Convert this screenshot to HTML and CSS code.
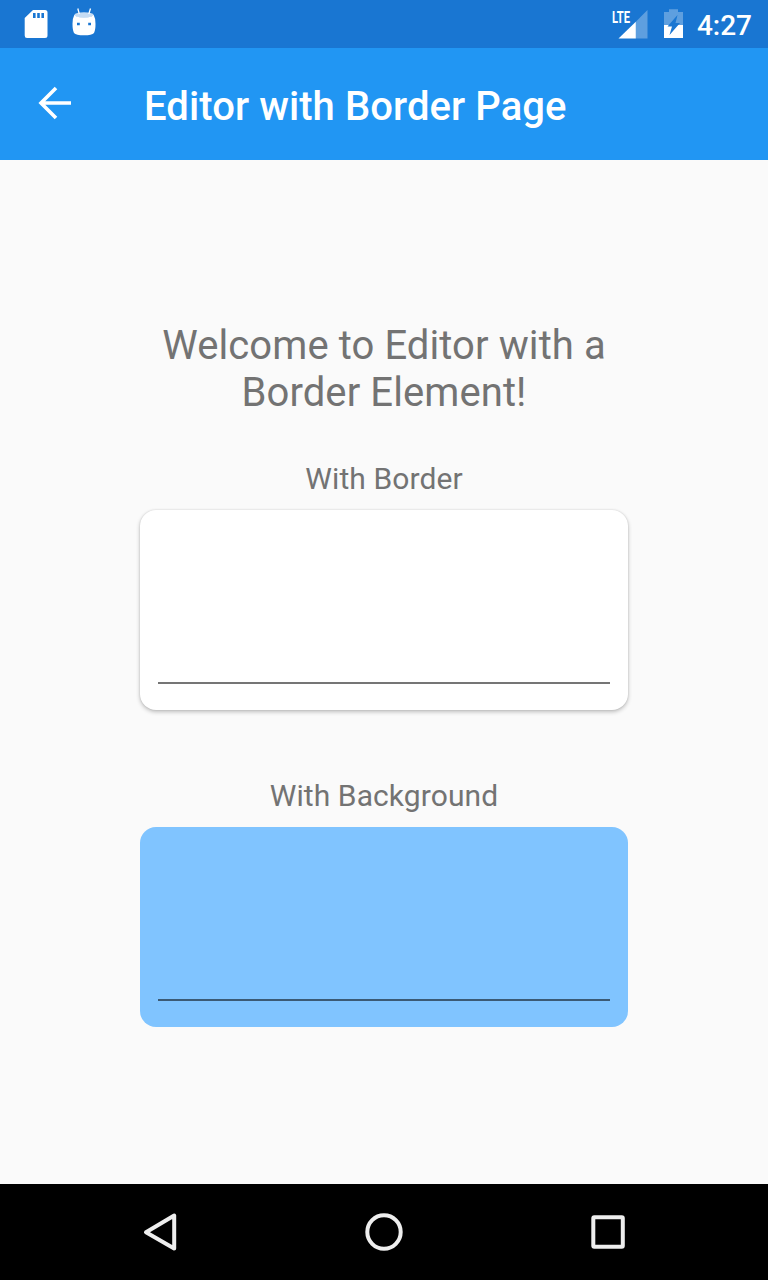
FILE: index.html
```html
<!DOCTYPE html>
<html lang="en">
<head>
<meta charset="utf-8">
<title>Editor with Border Page</title>
<link rel="stylesheet" href="styles.css">
</head>
<body>
<div class="screen">
  <header class="status-bar">
    <svg class="status-icons" width="110" height="48" viewBox="0 0 110 48" fill="#fff">
      <path fill-rule="evenodd" d="M33 10H45Q47.500 10 47.500 12.500V35.500Q47.500 38 45 38H27Q24.700 38 24.700 35.500V18ZM33 13V18H35.600V13ZM37.200 13V18H39.800V13ZM41.400 13V18H44V13Z"/>
      <path fill-rule="evenodd" d="M74.500 14.500Q75 17.500 84 17.500Q93 17.500 93.500 14.500Q95.500 18 95.500 24Q95.500 30 94 33Q92 35.300 84 35.300Q76 35.300 74 33Q72.500 30 72.500 24Q72.500 18 74.500 14.500ZM77 22.700V25.300H79.800V22.700ZM88.200 22.700V25.300H91V22.700Z"/>
      <ellipse opacity=".75" cx="84" cy="15" rx="9.500" ry="2.700"/>
      <path d="M77.800 8.500L79.300 14M90.500 8.500L88.800 14" stroke="#fff" stroke-width="1.300"/>
    </svg>
    <div class="status-right">
      <svg width="80" height="48" viewBox="608 0 80 48" fill="#fff">
        <path opacity=".3" d="M647.500 10V38.500H635.800V21.700Z"/>
        <path d="M635.800 21.700V38.500H618.500Z"/>
        <text class="network" x="612" y="22.500" textLength="18" lengthAdjust="spacingAndGlyphs">LTE</text>
        <path opacity=".3" d="M664 12H669V9.300H678V12H683V25H664Z"/>
        <path d="M664 25H683V38H664Z"/>
        <path d="M677.500 15L667.500 26.500H672L669.500 35L680 23H675.500Z" fill="#1976d2"/>
      </svg>
      <span class="clock">4:27</span>
    </div>
  </header>
  <div class="toolbar">
    <svg class="back" width="36" height="36" viewBox="0 0 36 36" fill="none" stroke="#fff" stroke-width="3.600"><path d="M20 3L5 18L20 33M5 18H35"/></svg>
    <h1 class="title">Editor with Border Page</h1>
  </div>
  <main class="content">
    <p class="welcome">Welcome to Editor with a<br>Border Element!</p>
    <label class="label" for="a">With Border</label>
    <div class="card bordered"><textarea class="editor" id="a"></textarea></div>
    <label class="label second" for="b">With Background</label>
    <div class="card filled"><textarea class="editor" id="b"></textarea></div>
  </main>
  <nav class="nav-bar">
    <svg width="48" height="48" viewBox="0 0 48 48"><path d="M38.200 7.500V40.500L10 24.200Z"/></svg>
    <svg width="48" height="48" viewBox="0 0 48 48"><circle cx="24" cy="24" r="16.700"/></svg>
    <svg width="48" height="48" viewBox="0 0 48 48"><rect x="9.300" y="9.300" width="29.500" height="29.500" rx="1"/></svg>
  </nav>
</div>
</body>
</html>
```
FILE: styles.css
```css
body { margin: 0; font-family: Roboto, sans-serif; }
.screen { width: 768px; height: 1280px; display: flex; flex-direction: column; background: #fafafa; }
.status-bar { height: 48px; display: flex; justify-content: space-between; background: #1976d2; }
.status-right { display: flex; padding-right: 16px; }
.network { font: 700 16.5px Roboto, sans-serif; }
.clock { width: 56px; margin-left: 8px; font-size: 28px; font-weight: 500; line-height: 51px; color: #fff; text-align: right; white-space: nowrap; }
.toolbar { height: 112px; display: flex; align-items: center; background: #2196f3; }
.back { margin: -3px 0 0 36px; }
.title { margin: 6px 0 0 72px; font-size: 40px; font-weight: 500; line-height: 48px; letter-spacing: .08px; color: #fff; }
.content { flex: 1; display: flex; flex-direction: column; align-items: center; color: #737373; }
.welcome { margin: 162px 0 0; font-size: 40px; line-height: 47px; letter-spacing: .09px; text-align: center; }
.label { height: 36px; margin: 45px 0 13px; font-size: 30px; line-height: 36px; letter-spacing: .09px; }
.second { margin: 68px 0 13px; }
.card { box-sizing: border-box; width: 488px; height: 200px; padding: 0 18px 26px; border-radius: 16px; }
.bordered { background: #fff; box-shadow: 0 2px 4px rgba(0, 0, 0, .24), 0 0 2px rgba(0, 0, 0, .14); }
.filled { background: #80c4ff; }
.editor { display: block; box-sizing: border-box; width: 100%; height: 174px; border: 0; border-bottom: 2px solid rgba(0, 0, 0, .54); background: transparent; resize: none; outline: 0; }
.nav-bar { height: 96px; display: flex; justify-content: space-between; align-items: center; padding: 0 136px; background: #000; fill: none; stroke: #eee; stroke-width: 4; stroke-linejoin: round; }
```
